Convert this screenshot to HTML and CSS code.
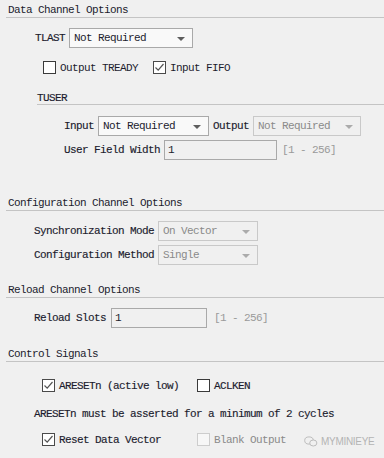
FILE: index.html
```html
<!DOCTYPE html>
<html lang="en">
<head>
    <meta charset="UTF-8">
    <title>AXI Options</title>
    <link rel="stylesheet" href="styles.css">
</head>
<body>

<!--Data channel-->
<div class="sectionTitle">Data Channel Options</div>

<div class="row tlastRow">
    <span class="label strong">TLAST</span>
    <div class="select tlastSelect"><span>Not Required</span><i class="arrow"></i></div>
</div>

<div class="row checkRow dataChecks">
    <span class="check"></span>
    <span class="checkText">Output TREADY</span>
    <span class="check checked second">
        <svg width="11" height="11" viewBox="0 0 11 11"><path d="M1.5 5.5 L4.2 8.2 L9.5 2" fill="none" stroke="#555" stroke-width="1.2"/></svg>
    </span>
    <span class="checkText">Input FIFO</span>
</div>

<div class="subTitle strong">TUSER</div>

<div class="row userRow">
    <span class="label strong">Input</span>
    <div class="select inputSelect"><span>Not Required</span><i class="arrow"></i></div>
    <span class="label strong outLabel">Output</span>
    <div class="select outputSelect disabled"><span>Not Required</span><i class="arrow"></i></div>
</div>

<div class="row userRow widthRow">
    <span class="label strong">User Field Width</span>
    <div class="field userField">1</div>
    <span class="range">[1 - 256]</span>
</div>

<!--Configuration channel-->
<div class="sectionTitle configTitle">Configuration Channel Options</div>

<div class="row indentRow syncRow">
    <span class="label strong">Synchronization Mode</span>
    <div class="select smallSelect disabled"><span>On Vector</span><i class="arrow"></i></div>
</div>

<div class="row indentRow methodRow">
    <span class="label strong">Configuration Method</span>
    <div class="select smallSelect disabled"><span>Single</span><i class="arrow"></i></div>
</div>

<!--Reload channel-->
<div class="sectionTitle reloadTitle">Reload Channel Options</div>

<div class="row indentRow slotsRow">
    <span class="label strong">Reload Slots</span>
    <div class="field slotsField">1</div>
    <span class="range slotsRange">[1 - 256]</span>
</div>

<!--Control signals-->
<div class="sectionTitle controlTitle">Control Signals</div>

<div class="row checkRow resetRow">
    <span class="check checked">
        <svg width="11" height="11" viewBox="0 0 11 11"><path d="M1.5 5.5 L4.2 8.2 L9.5 2" fill="none" stroke="#555" stroke-width="1.2"/></svg>
    </span>
    <span class="checkText strong resetText">ARESETn (active low)</span>
    <span class="check"></span>
    <span class="checkText strong">ACLKEN</span>
</div>

<p class="message strong">ARESETn must be asserted for a minimum of 2 cycles</p>

<div class="row checkRow vectorRow">
    <span class="check checked">
        <svg width="11" height="11" viewBox="0 0 11 11"><path d="M1.5 5.5 L4.2 8.2 L9.5 2" fill="none" stroke="#555" stroke-width="1.2"/></svg>
    </span>
    <span class="checkText strong vectorText">Reset Data Vector</span>
    <span class="check disabledCheck"></span>
    <span class="checkText grey">Blank Output</span>
    <span class="watermark">
        <svg width="14" height="11" viewBox="0 0 14 11">
            <ellipse cx="5" cy="4.5" rx="4.3" ry="3.6" fill="none" stroke="#bdbdbd" stroke-width="1"/>
            <ellipse cx="9.3" cy="7" rx="3.6" ry="3" fill="#f0f0f0" stroke="#bdbdbd" stroke-width="1"/>
        </svg>
        MYMINIEYE
    </span>
</div>

</body>
</html>
```

FILE: styles.css
```css
/*whole page*/
body {
    margin: 0;
    width: 384px;
    height: 458px;
    overflow: hidden;
    background-color: #f0f0f0;
    font-family: "Liberation Mono", "DejaVu Sans Mono", monospace;
    font-size: 11px;
    letter-spacing: -0.6px;
    color: #1c1c2e;
}

/*section headers with a line under them*/
.sectionTitle {
    margin-left: 6px;
    padding: 3px 0 0 2px;
    height: 14px;
    line-height: 14px;
    border-bottom: 1px solid #c4c4c4;
}

.configTitle {
    margin-top: 33px;
}

.reloadTitle {
    margin-top: 15px;
}

.controlTitle {
    margin-top: 16px;
}

.subTitle {
    margin: 19px 0 0 37px;
    height: 11px;
    line-height: 11px;
    border-bottom: 1px solid #c4c4c4;
}

.row {
    display: flex;
    align-items: center;
    height: 20px;
}

.strong {
    -webkit-text-stroke: 0.15px #1c1c2e;
}

.label {
    margin-right: 4px;
    white-space: nowrap;
}

/*drop down boxes*/
.select {
    position: relative;
    box-sizing: border-box;
    height: 20px;
    line-height: 18px;
    padding-left: 4px;
    border: 1px solid #a9a9a9;
    background-color: #f9f9f9;
    white-space: nowrap;
}

.select.disabled {
    border-color: #c9c9c9;
    background-color: #f0f0f0;
    color: #8a8a8a;
}

.arrow {
    position: absolute;
    right: 7px;
    top: 8px;
    width: 0;
    height: 0;
    border-left: 4px solid transparent;
    border-right: 4px solid transparent;
    border-top: 4px solid #5e5e5e;
}

.disabled .arrow {
    border-top-color: #ababab;
}

.field {
    box-sizing: border-box;
    height: 20px;
    line-height: 18px;
    padding-left: 3px;
    border: 1px solid #a9a9a9;
    background-color: #f0f0f0;
}

.range {
    color: #9a9a9a;
    margin-left: 5px;
}

/*data channel*/
.tlastRow {
    margin: 10px 0 0 35px;
}

.tlastSelect {
    width: 124px;
}

.checkRow {
    height: 13px;
}

.dataChecks {
    margin: 13px 0 0 43px;
}

.check {
    box-sizing: border-box;
    display: inline-flex;
    align-items: center;
    justify-content: center;
    width: 13px;
    height: 13px;
    border: 1px solid #3a3a3a;
    background-color: #ffffff;
    flex-shrink: 0;
}

.check.checked {
    border-color: #4a4a4a;
}

.checkText {
    margin-left: 4px;
    white-space: nowrap;
}

.second {
    margin-left: 15px;
}

.userRow {
    margin: 11px 0 0 64px;
}

.widthRow {
    margin-top: 4px;
}

.inputSelect {
    width: 111px;
}

.outLabel {
    margin-left: 4px;
}

.outputSelect {
    width: 108px;
}

.userField {
    width: 113px;
}

/*configuration channel*/
.indentRow {
    margin-left: 34px;
}

.syncRow {
    margin-top: 10px;
}

.methodRow {
    margin-top: 4px;
}

.smallSelect {
    width: 100px;
}

/*reload channel*/
.slotsRow {
    margin-top: 10px;
}

.slotsRow .label {
    margin-right: 5px;
}

.slotsField {
    width: 96px;
}

.slotsRange {
    margin-left: 7px;
}

/*control signals*/
.resetRow {
    margin: 17px 0 0 42px;
}

.resetText {
    width: 138px;
}

.message {
    margin: 15px 0 0 34px;
    height: 14px;
    line-height: 14px;
}

.vectorRow {
    margin: 12px 0 0 42px;
}

.vectorText {
    width: 138px;
}

.disabledCheck {
    border-color: #cdcdcd;
    background-color: #f7f7f7;
}

.grey {
    color: #8a8a8a;
}

.watermark {
    display: inline-flex;
    align-items: center;
    gap: 3px;
    margin-left: 18px;
    margin-top: 3px;
    font-family: "Liberation Sans", Arial, sans-serif;
    font-size: 10px;
    color: #b4b4b4;
    letter-spacing: -0.3px;
}
```
